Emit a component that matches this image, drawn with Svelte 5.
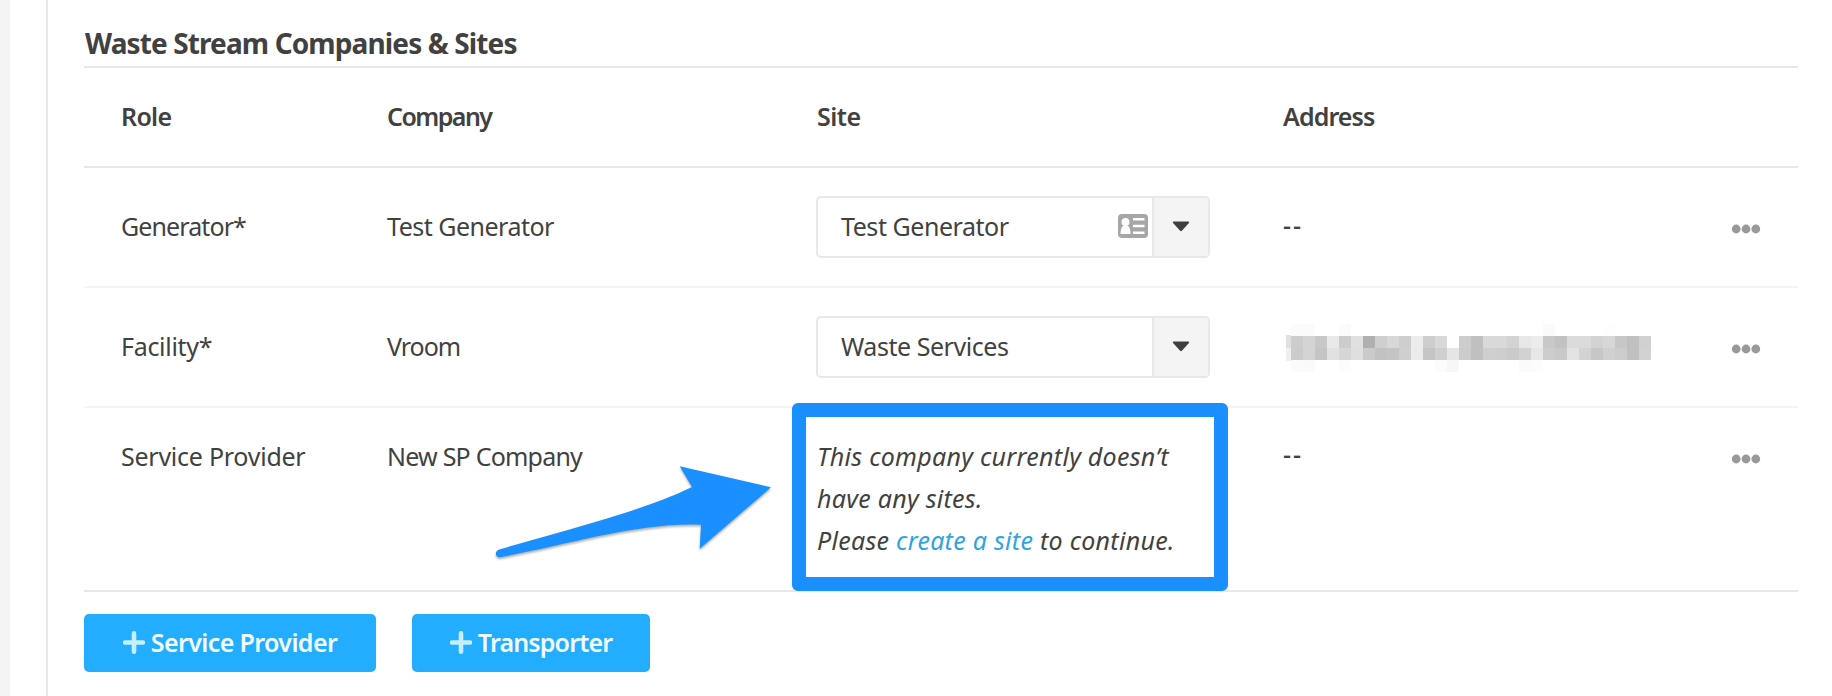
<script>
	const headers = [
		{ text: 'Role', spacing: -0.7 },
		{ text: 'Company', spacing: -1.55 },
		{ text: 'Site', spacing: -0.5 },
		{ text: 'Address', spacing: -0.9 }
	];

	const rows = [
		{ role: 'Generator*', roleSpacing: -0.9, company: 'Test Generator', companySpacing: -0.5, site: 'Test Generator', card: true, address: '--' },
		{ role: 'Facility*', roleSpacing: -0.3, company: 'Vroom', companySpacing: -1, site: 'Waste Services', card: false, address: null },
		{ role: 'Service Provider', roleSpacing: -0.25, company: 'New SP Company', companySpacing: -0.78, site: null, card: false, address: '--' }
	];

	const buttons = [
		{ text: 'Service Provider', spacing: -0.62, width: 292 },
		{ text: 'Transporter', spacing: -0.85, width: 238 }
	];

	// grey levels of the hidden address
	const mosaic = [
		'fb fb ff ff fb ff ff ff ff ff ff ff ff ff ff ff ff ff ff ff ff fa ff ff ff ff fe ff ff ff',
		'cd d4 c8 e9 cc e0 b0 cf d8 ce ec ce d9 ff cd c0 d9 d9 d3 e7 ec c8 c2 db db d3 d7 c7 c0 d1',
		'cb d4 c5 e1 d6 df ca c2 c4 cf eb c5 cf e5 cc c0 cf ce ca d2 e7 cc c9 e3 d3 c7 d0 cc c0 d2',
		'fb fa ff ff fc ff ff ff ff ff ff ff fc f7 ff ff ff ff ff fb fc ff ff ff ff ff ff ff ff ff'
	].join(' ').split(' ');
</script>

<main>
	<section class="panel">
		<h2>Waste Stream Companies &amp; Sites</h2>

		<div class="table">
			<div class="row head">
				{#each headers as h}
					<div style="letter-spacing: {h.spacing}px">{h.text}</div>
				{/each}
			</div>

			{#each rows as row}
				<div class="row" class:empty={!row.site}>
					<div style="letter-spacing: {row.roleSpacing}px">{row.role}</div>
					<div style="letter-spacing: {row.companySpacing}px">{row.company}</div>
					<div>
						{#if row.site}
							<div class="select">
								<span class="value">{row.site}</span>
								{#if row.card}
									<svg class="card" width="30" height="24" viewBox="0 0 30 24">
										<rect width="30" height="24" rx="4" fill="#a6a6a6" />
										<circle cx="7.5" cy="8" r="4" fill="#fff" />
										<path d="M2.5 20c0-5 1.5-7.5 3-8.5h4c1.500 1 3 3.500 3 8.500z" fill="#fff" />
										<path d="M15 5.300h11.500M15 12h11.500M15 18.700h11.500" stroke="#fff" stroke-width="2.400" />
									</svg>
								{/if}
								<span class="toggle">
									<svg width="18" height="11" viewBox="0 0 18 11">
										<path d="M1.600.500h14.800q1.300.300.500 1.500l-7 7.700q-.900.900-1.800 0l-7-7.700q-.800-1.200.500-1.500z" fill="#3f3f3f" />
									</svg>
								</span>
							</div>
						{:else}
							<div class="message">
								This company currently doesn’t<br />have any sites.<br />
								Please <a href="#create">create a site</a> to continue.
								<div class="highlight"></div>
								<svg class="arrow" width="290" height="104" viewBox="490 460 290 104">
									<path d="M771 487.300 679.700 466.300 692 487C645 510 580 526 498.500 549.700C494.500 551.500 495 557.500 500 557.300C570 544 640 522 701 524.700L699.700 548.700Z" fill="#1a8fff" />
								</svg>
							</div>
						{/if}
					</div>
					<div>
						{#if row.address}
							<div class="none">{row.address}</div>
						{:else}
							<div class="mosaic">
								{#each mosaic as level}
									<i style="background: #{level}{level}{level}"></i>
								{/each}
							</div>
						{/if}
					</div>
					<div class="dots">
						<svg width="30" height="10" viewBox="0 0 30 10" fill="#999">
							<circle cx="5.200" cy="5" r="4.400" />
							<circle cx="15" cy="5" r="4.400" />
							<circle cx="24.800" cy="5" r="4.400" />
						</svg>
					</div>
				</div>
			{/each}
		</div>

		<div class="actions">
			{#each buttons as b}
				<button style="width: {b.width}px; letter-spacing: {b.spacing}px">
					<svg width="22" height="23" viewBox="0 0 22 23">
						<path d="M11 2.300v18.400M2 11.500h18" stroke="#c5eeff" stroke-width="4.600" stroke-linecap="round" />
					</svg>
					<span>{b.text}</span>
				</button>
			{/each}
		</div>
	</section>
</main>

<style>
	:global(body) {
		margin: 0;
		overflow: hidden;
		background: #fff;
	}

	main {
		box-sizing: border-box;
		height: 696px;
		border-left: 10px solid #f4f4f4;
		padding-left: 36px;
		font: 25px 'Noto Sans', sans-serif;
		color: #414141;
	}

	.panel {
		box-sizing: border-box;
		height: 696px;
		border-left: 2px solid #e8e8e8;
		padding: 22px 34px 0 36px;
	}

	h2 {
		box-sizing: border-box;
		height: 44px;
		margin: 0;
		padding-left: 1px;
		font-size: 28px;
		font-weight: 700;
		line-height: 43px;
		letter-spacing: -0.88px;
		white-space: nowrap;
	}

	.table {
		border-top: 2px solid #e8e8e8;
	}

	.row {
		box-sizing: border-box;
		display: grid;
		grid-template-columns: 266px 429px 466px 1fr 76px;
		align-items: center;
		height: 120px;
		padding-left: 37px;
		border-bottom: 2px solid #f4f4f4;
		line-height: 42px;
		white-space: nowrap;
	}

	.row:not(.empty) > div:nth-child(-n + 2) {
		padding-bottom: 2px;
	}

	.head {
		height: 100px;
		border-bottom-color: #e8e8e8;
		font-weight: 600;
	}

	.head > div:nth-child(n + 3) {
		padding: 0 0 2px 1px;
	}

	.empty {
		height: 184px;
		align-items: start;
		padding-top: 27px;
		border-bottom-color: #e8e8e8;
	}

	.select {
		box-sizing: border-box;
		display: flex;
		align-items: center;
		width: 394px;
		height: 62px;
		border: 2px solid #e8e8e8;
		border-radius: 5px;
		overflow: hidden;
	}

	.value {
		flex: 1;
		padding: 0 0 2px 23px;
		letter-spacing: -0.45px;
	}

	.card {
		margin: -2px 4px 0 0;
	}

	.toggle {
		box-sizing: border-box;
		display: flex;
		align-items: center;
		justify-content: center;
		width: 56px;
		height: 58px;
		padding-bottom: 2px;
		border-left: 2px solid #e8e8e8;
		background: #f4f4f4;
	}

	.message {
		position: relative;
		padding-left: 1px;
		font-style: italic;
		letter-spacing: 0.28px;
	}

	a {
		color: #2fa4de;
		text-decoration: none;
	}

	.highlight {
		position: absolute;
		box-sizing: border-box;
		left: -24px;
		top: -32px;
		width: 436px;
		height: 188px;
		border: 14px solid #1a8fff;
		border-radius: 6px;
		pointer-events: none;
	}

	.arrow {
		position: absolute;
		left: -326px;
		top: 25px;
		filter: drop-shadow(0 2px 1px rgba(0, 0, 0, 0.3));
	}

	.none {
		margin: -2px 0 2px;
		padding-left: 1px;
		letter-spacing: 2px;
		font-weight: 500;
	}

	.mosaic {
		display: grid;
		grid-template-columns: repeat(30, 12px);
		grid-auto-rows: 12px;
		width: 361px;
		margin: 2px 0 0 4px;
		border-left: 5px solid #fff;
		border-image: linear-gradient(#fff 25%, #e0e0e0 25% 50%, #efefef 50% 75%, #fff 75%) 1;
		border-width: 0 0 0 5px;
	}

	.dots {
		display: flex;
		align-items: center;
		height: 42px;
		padding: 4px 0 0 9px;
	}

	.empty .dots {
		padding-top: 3px;
	}

	.actions {
		display: flex;
		gap: 36px;
		padding-top: 22px;
	}

	button {
		display: flex;
		align-items: center;
		justify-content: center;
		gap: 6px;
		height: 58px;
		padding: 0;
		border: 0;
		border-radius: 5px;
		background: #23adff;
		color: #f2fdff;
		font: 600 25px 'Noto Sans', sans-serif;
		white-space: nowrap;
	}

	button svg,
	button span {
		margin-bottom: 2px;
	}
</style>
